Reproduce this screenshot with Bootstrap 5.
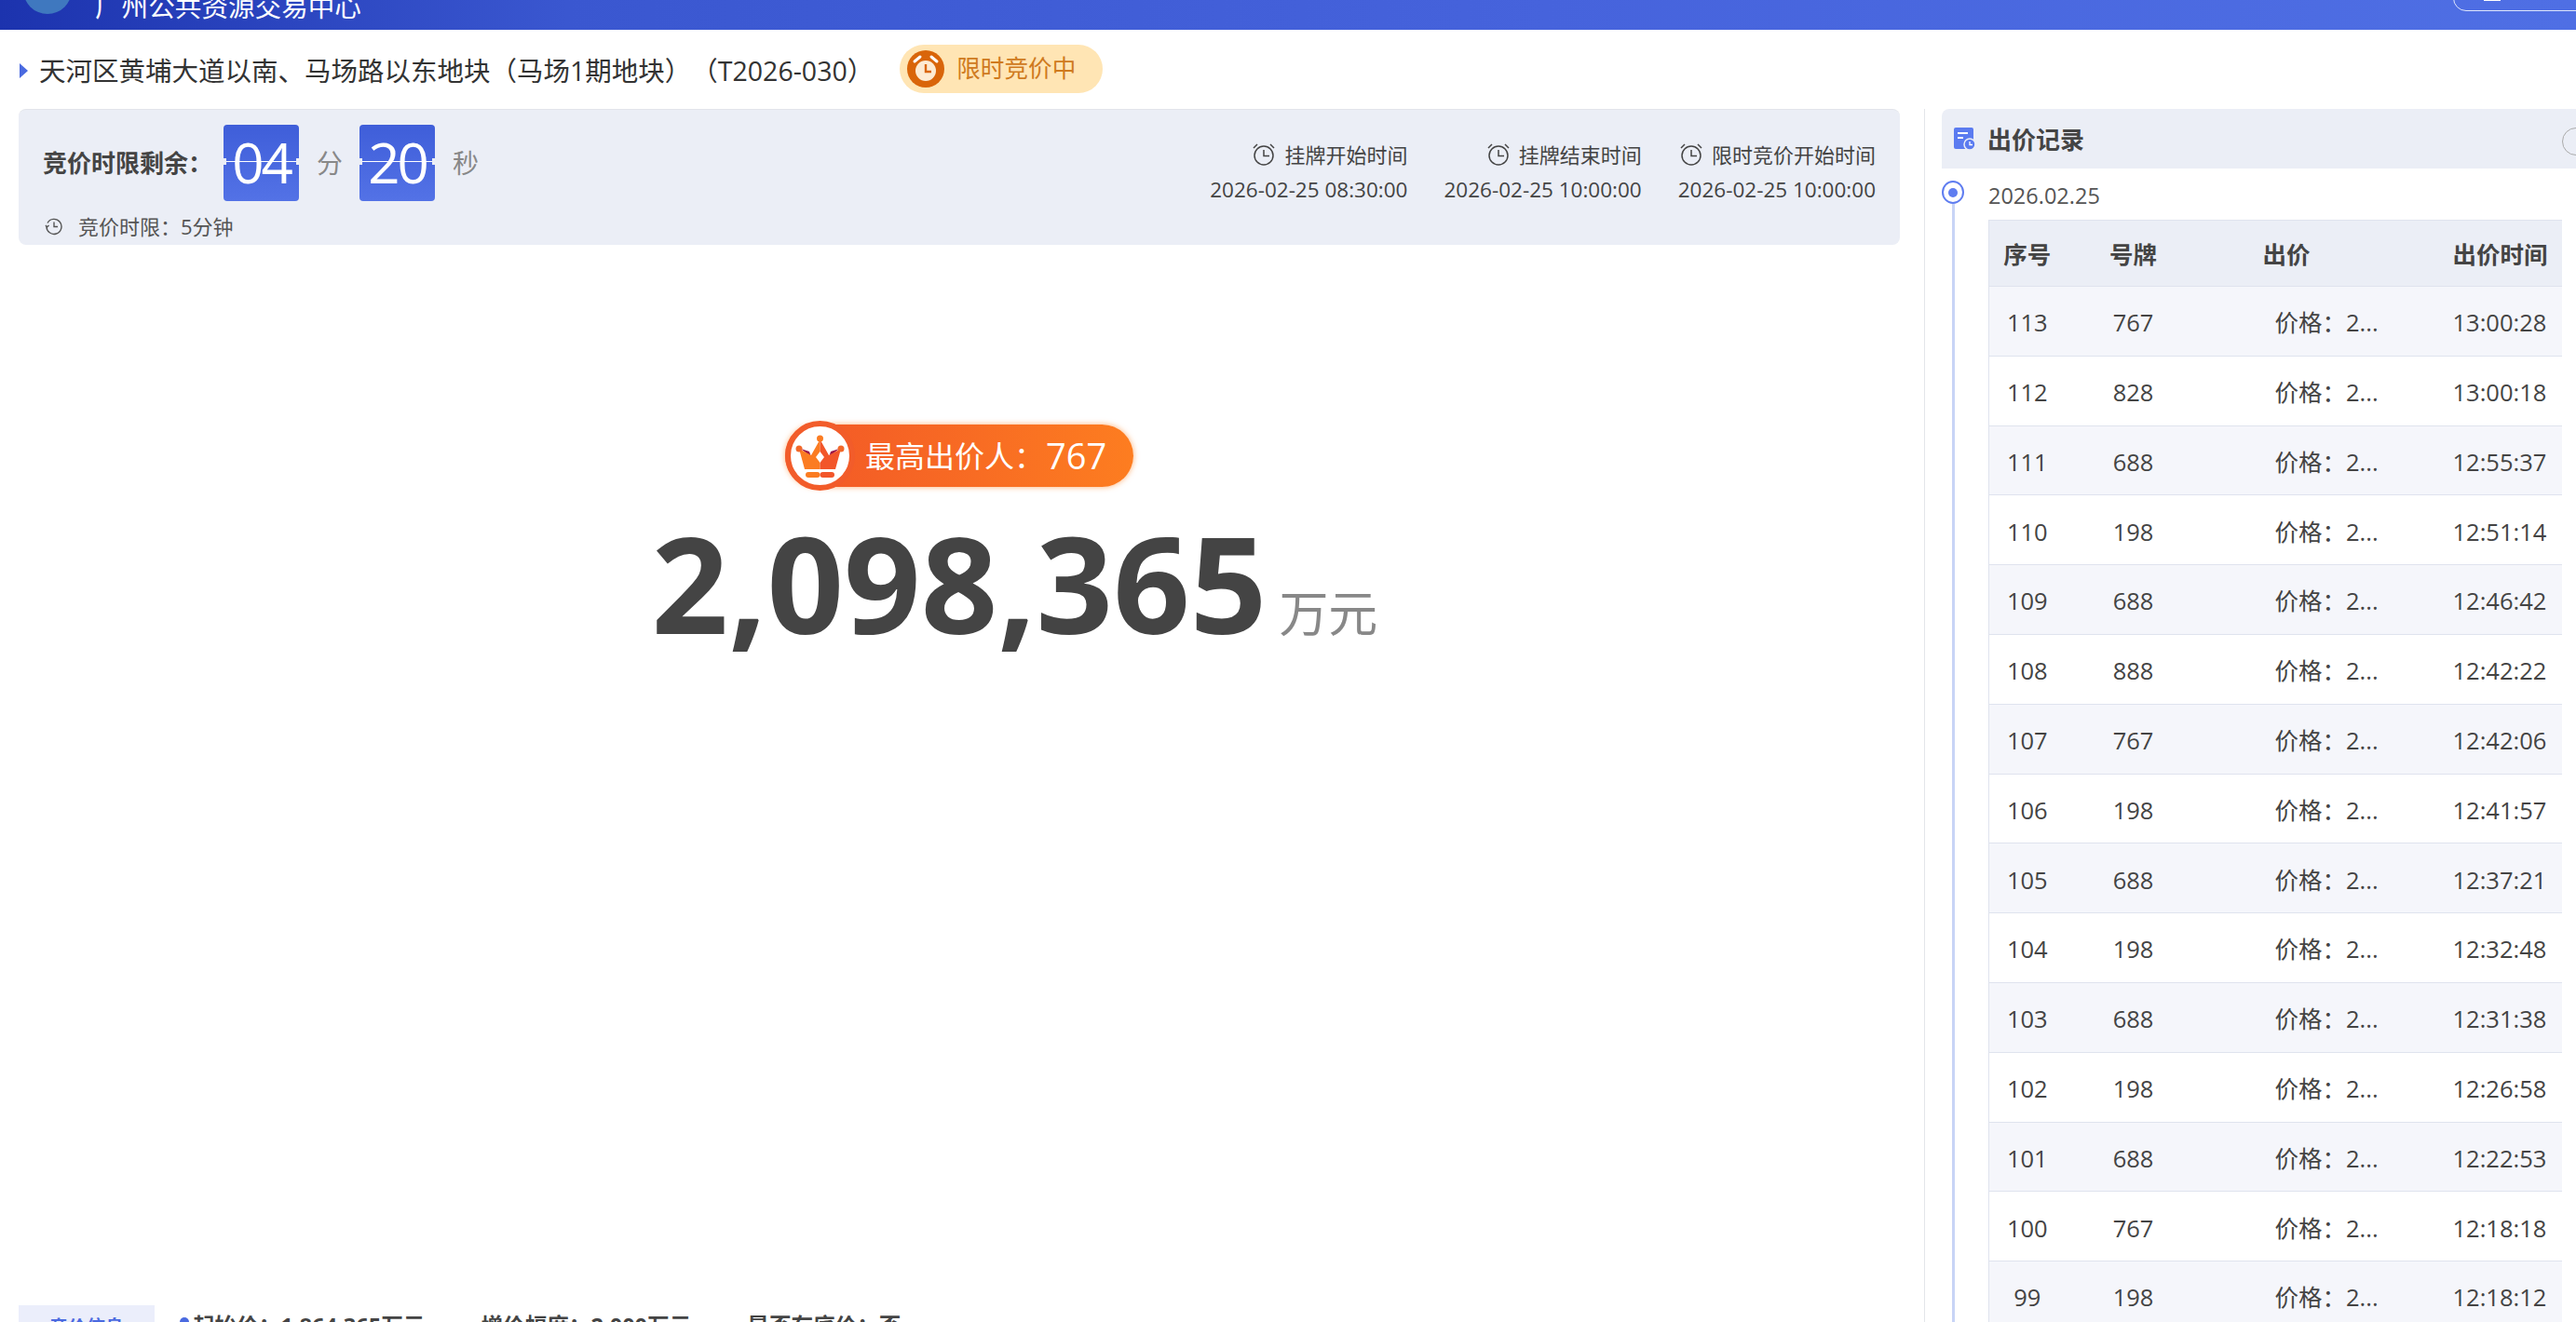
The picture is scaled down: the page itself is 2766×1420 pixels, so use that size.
<!DOCTYPE html>
<html lang="zh-CN">
<head>
    <meta charset="UTF-8">
    <title>限时竞价</title>
    <link href="https://cdn.jsdelivr.net/npm/bootstrap@5.3.3/dist/css/bootstrap.min.css" rel="stylesheet" crossorigin="anonymous">
    <style>
        html, body { height: 1420px; overflow: hidden; }
        body { font-family: "Open Sans", "Noto Sans CJK SC", sans-serif; color: #444; background: #fff; text-spacing-trim: space-all; }

        .top-bar { height: 32px; overflow: hidden; background: linear-gradient(90deg, #1c33ae 0, #3a57d0 22%, #4663dc 60%, #4f6fe4 100%); padding: 0 0 0 25px; }
        .top-logo { width: 52px; height: 52px; flex: none; border-radius: 50%; background: #3f78bf; margin-bottom: 17px; }
        .top-name { color: #fff; font-size: 28.6px; line-height: 40px; margin: 0 0 5px 25px; white-space: nowrap; flex: none; }
        .top-user { width: 160px; height: 44px; flex: none; margin-bottom: 20px; border: 1px solid #dfe6fb; border-radius: 14px; margin-right: -28px; padding-left: 32px; }
        .top-user svg { display: block; margin-top: 28px; }

        .title-row { height: 85px; padding: 16px 0 0 21px; }
        .title-arrow { width: 0; height: 0; border-left: 9px solid #4a6ae0; border-top: 8px solid transparent; border-bottom: 8px solid transparent; margin-right: 12px; }
        .title-text { font-size: 28.5px; line-height: 56px; color: #333; white-space: nowrap; }
        .status-pill { height: 52px; width: 218px; margin-left: 28px; border-radius: 26px; background: #ffe5b4; color: #cf7a1e; font-size: 25.6px; padding-left: 7px; }

        .main-row { height: 1303px; }
        .left-col { width: 2020px; margin-left: 20px; flex: none; }
        .info-panel { height: 146px; background: #ebeef6; border-radius: 8px; border-top: 1px solid #e2e4ea; padding: 16px 26px 0 26px; position: relative; }
        .count-label { font-size: 26px; font-weight: 700; color: #444; width: 194px; white-space: nowrap; }
        .flip-box { width: 81px; height: 82px; border-radius: 4px; background: linear-gradient(180deg, #3f5ed9, #5372e6); color: #fff; font-size: 60px; letter-spacing: -3px; line-height: 80px; text-align: center; position: relative; }
        .flip-box::before { content: ""; position: absolute; left: 0; right: 0; top: 39px; height: 1px; background: #fff; }
        .flip-box::after { content: ""; position: absolute; left: -3px; right: -3px; top: 36px; height: 7px; border-left: 6px solid #ebeef6; border-right: 6px solid #ebeef6; border-radius: 4px; }
        .flip-unit { font-size: 28px; color: #888; width: 65px; padding-left: 19px; }
        .limit-line { font-size: 22px; line-height: 30px; color: #555; position: absolute; left: 28px; top: 110px; }
        .time-col { text-align: right; font-size: 22px; color: #444; white-space: nowrap; line-height: 37px; margin-top: 14px; }
        .time-col + .time-col { margin-left: 39px; }
        .time-col svg { margin-right: 9px; vertical-align: -3px; }
        .time-value { font-size: 22.5px; }

        .center-block { height: 1139px; padding-top: 193px; }
        .leader-badge { width: 374px; height: 67px; margin: 0 auto; border-radius: 34px; background: linear-gradient(90deg, #f25727, #fd7d20); box-shadow: 0 0 6px rgba(253, 150, 70, .75); color: #fff; position: relative; font-size: 32px; padding-left: 86px; white-space: nowrap; }
        .leader-badge b { font-weight: 400; font-size: 38px; margin-left: 2px; }
        .crown-ring { position: absolute; left: 0; top: -4px; width: 75px; height: 75px; }
        .price-line { margin-top: 22px; line-height: 160px; white-space: nowrap; }
        .price-num { font-size: 144.5px; font-weight: 700; color: #444; }
        .price-unit { font-size: 53px; color: #888; margin-left: 13px; margin-right: -119px; line-height: 1; padding-top: 66px; }

        .base-strip { height: 60px; white-space: nowrap; }
        .base-tab { width: 146px; height: 50px; background: #ebeefb; color: #4a6ae0; font-size: 20px; font-weight: 700; text-align: center; line-height: 44px; padding-top: 2px; }
        .base-dot { width: 10px; height: 10px; border-radius: 50%; background: #4a6ae0; margin: 13px 4px 0 27px; }
        .base-item { font-size: 23.6px; font-weight: 700; color: #444; line-height: 44px; }
        .base-item + .base-item { margin-left: 60px; }

        .split-line { width: 1px; background: #e3e5ea; margin-left: 26px; flex: none; }
        .right-col { margin-left: 18px; flex: 1; min-width: 0; overflow: hidden; }
        .record-head { height: 64px; background: #ebeef6; border-radius: 8px 0 0 0; padding-left: 13px; position: relative; }
        .record-title { font-size: 26px; font-weight: 700; color: #444; margin-left: 13px; padding-top: 2px; }
        .record-switch { position: absolute; left: 666px; top: 20px; width: 30px; height: 30px; border: 1px solid #aaa; border-radius: 50%; }
        .record-body { position: relative; padding-left: 50px; }
        .line-dot { position: absolute; left: 0; top: 13px; width: 24px; height: 25px; border: 2px solid #5f7df0; border-radius: 50%; background: #fff; }
        .line-dot::after { content: ""; position: absolute; left: 5px; top: 5.5px; width: 10px; height: 10px; border-radius: 50%; background: #5f7df0; }
        .line-rail { position: absolute; left: 11px; top: 38px; bottom: 0; width: 3px; background: #c8d4f6; }
        .record-date { font-size: 23.5px; line-height: 30px; color: #555; padding-top: 14px; height: 55px; }
        .bid-table { width: 616px; table-layout: fixed; margin: 0; --bs-table-striped-bg: #f5f6fb; --bs-table-striped-color: #444; --bs-table-color: #444; --bs-table-border-color: #dfe3ee; border-top: 1px solid #dfe3ee; border-left: 1px solid #dfe3ee; }
        .bid-table th, .bid-table td { padding: 3px 0 0; vertical-align: middle; text-align: center; font-size: 25.500px; white-space: nowrap; }
        .bid-table th { height: 71px; background: #ebeef6; font-weight: 700; }
        .bid-table td { height: 74.8px; }
        .bid-table .price-head { text-align: left; padding-left: 66px; }
        .bid-table .price-cell { text-align: left; padding-left: 79px; }
        .bid-table .time-head, .bid-table .time-cell { text-align: left; padding-left: 19px; }
        .price-clip { display: block; width: 110px; overflow: hidden; }
    </style>
</head>
<body>
    <div class="top-bar d-flex align-items-end">
        <div class="top-logo"></div>
        <div class="top-name">广州公共资源交易中心</div>
        <div class="top-user ms-auto">
            <svg width="18" height="6" viewBox="0 0 18 6"><path d="M5 0h8v2h5v2H0V2h5z" fill="#fff"/></svg>
        </div>
    </div>

    <div class="title-row d-flex align-items-start">
        <div class="d-flex align-items-center">
            <span class="title-arrow"></span>
            <span class="title-text">天河区黄埔大道以南、马场路以东地块（马场1期地块）（T2026-030）</span>
        </div>
        <div class="status-pill d-flex align-items-center gap-2">
            <svg width="42" height="42" viewBox="0 0 42 42">
                <circle cx="21" cy="21" r="20" fill="#d9650a"/>
                <path d="M9 13l6-5M33 13l-6-5" stroke="#fff" stroke-width="3" stroke-linecap="round"/>
                <circle cx="21" cy="23" r="11" fill="#fdebd3"/>
                <path d="M21 16v8h6" stroke="#d9650a" stroke-width="2.4" fill="none"/>
            </svg>
            <span class="ms-1">限时竞价中</span>
        </div>
    </div>

    <div class="main-row d-flex">
        <div class="left-col">
            <div class="info-panel d-flex">
                <div class="d-flex align-items-center align-self-start">
                    <span class="count-label">竞价时限剩余：</span>
                    <span class="flip-box">04</span>
                    <span class="flip-unit">分</span>
                    <span class="flip-box">20</span>
                    <span class="flip-unit">秒</span>
                </div>
                <div class="limit-line d-flex align-items-center">
                    <svg class="me-3" width="20" height="20" viewBox="0 0 20 20" fill="none" stroke="#555" stroke-width="1.4"><path d="M3 6.5A8 8 0 1 1 2 10"/><path d="M1 9l1.5 2L4.5 9"/><path d="M10 5.5V10.500H14"/></svg>
                    竞价时限：5分钟
                </div>
                <div class="ms-auto d-flex">
                    <div class="time-col"><div><svg width="26" height="24" viewBox="0 0 26 24" fill="none" stroke="#444" stroke-width="1.5"><circle cx="13" cy="13" r="10"/><path d="M13 7v6.500h6M2 5l4-4M24 5l-4-4"/></svg>挂牌开始时间</div><div class="time-value">2026-02-25 08:30:00</div></div>
                    <div class="time-col"><div><svg width="26" height="24" viewBox="0 0 26 24" fill="none" stroke="#444" stroke-width="1.5"><circle cx="13" cy="13" r="10"/><path d="M13 7v6.500h6M2 5l4-4M24 5l-4-4"/></svg>挂牌结束时间</div><div class="time-value">2026-02-25 10:00:00</div></div>
                    <div class="time-col"><div><svg width="26" height="24" viewBox="0 0 26 24" fill="none" stroke="#444" stroke-width="1.5"><circle cx="13" cy="13" r="10"/><path d="M13 7v6.500h6M2 5l4-4M24 5l-4-4"/></svg>限时竞价开始时间</div><div class="time-value">2026-02-25 10:00:00</div></div>
                </div>
            </div>

            <div class="center-block">
                <div class="leader-badge d-flex align-items-center">
                    <svg class="crown-ring" viewBox="0 0 75 75">
                        <circle cx="37.500" cy="37.500" r="34.500" fill="#fff" stroke="#f25c2a" stroke-width="6"/>
                        <path d="M17 30l9 3 2 6zM58 30l-9 3-2 6z" fill="#9a1348"/>
                        <path d="M37.500 20L28 37 15 30l6 22h16.500z" fill="#fb7c22"/>
                        <path d="M37.500 20L47 37l13-7-6 22H37.500z" fill="#f2562a"/>
                        <circle cx="37.500" cy="19" r="3.500" fill="#fb7c22"/>
                        <circle cx="15" cy="30" r="3.500" fill="#f2682a"/>
                        <circle cx="60" cy="30" r="3.500" fill="#f2682a"/>
                        <path d="M37.500 33l4.500 6-4.500 6-4.500-6z" fill="#fff"/>
                        <rect x="22" y="55" width="15.500" height="6" rx="3" fill="#fb7c22"/>
                        <rect x="37.500" y="55" width="15.500" height="6" rx="3" fill="#f2562a"/>
                    </svg>
                    最高出价人：<b>767</b>
                </div>
                <div class="price-line d-flex justify-content-center">
                    <span class="price-num">2,098,365</span>
                    <span class="price-unit align-self-center">万元</span>
                </div>
            </div>

            <div class="base-strip d-flex">
                <div class="base-tab">竞价信息</div>
                <span class="base-dot"></span>
                <div class="d-flex">
                    <span class="base-item">起始价：1,864,365万元</span>
                    <span class="base-item">增价幅度：2,000万元</span>
                    <span class="base-item">是否有底价：否</span>
                </div>
            </div>
        </div>

        <div class="split-line"></div>

        <div class="right-col">
            <div class="record-head d-flex align-items-center">
                <svg width="23" height="24" viewBox="0 0 23 24">
                    <rect x="0" y="0" width="21" height="23" rx="2" fill="#5b7bf0"/>
                    <path d="M4 6h11M4 11h6" stroke="#fff" stroke-width="2"/>
                    <circle cx="17" cy="18" r="6" fill="#5b7bf0" stroke="#ebeef6" stroke-width="1.5"/>
                    <path d="M17 15v3.500h3" stroke="#fff" stroke-width="1.3" fill="none"/>
                </svg>
                <span class="record-title">出价记录</span>
                <span class="record-switch"></span>
            </div>
            <div class="record-body">
                <span class="line-dot"></span>
                <span class="line-rail"></span>
                <div class="record-date">2026.02.25</div>
                <table class="table table-striped bid-table">
                    <colgroup><col style="width:82px"><col style="width:146px"><col style="width:251px"><col></colgroup>
                    <thead>
                        <tr><th>序号</th><th>号牌</th><th class="price-head">出价</th><th class="time-head">出价时间</th></tr>
                    </thead>
                    <tbody id="bidRows"></tbody>
                </table>
            </div>
        </div>
    </div>

    <script>
        // bid records, newest first
        const bids = [
            [113, 767, '13:00:28'], [112, 828, '13:00:18'], [111, 688, '12:55:37'],
            [110, 198, '12:51:14'], [109, 688, '12:46:42'], [108, 888, '12:42:22'],
            [107, 767, '12:42:06'], [106, 198, '12:41:57'], [105, 688, '12:37:21'],
            [104, 198, '12:32:48'], [103, 688, '12:31:38'], [102, 198, '12:26:58'],
            [101, 688, '12:22:53'], [100, 767, '12:18:18'], [99, 198, '12:18:12']
        ];
        document.getElementById('bidRows').innerHTML = bids.map(b => `
            <tr>
                <td>${b[0]}</td>
                <td>${b[1]}</td>
                <td class="price-cell"><span class="price-clip">价格：2...</span></td>
                <td class="time-cell">${b[2]}</td>
            </tr>`).join('');
    </script>
    <script src="https://cdn.jsdelivr.net/npm/bootstrap@5.3.3/dist/js/bootstrap.bundle.min.js"></script>
</body>
</html>
